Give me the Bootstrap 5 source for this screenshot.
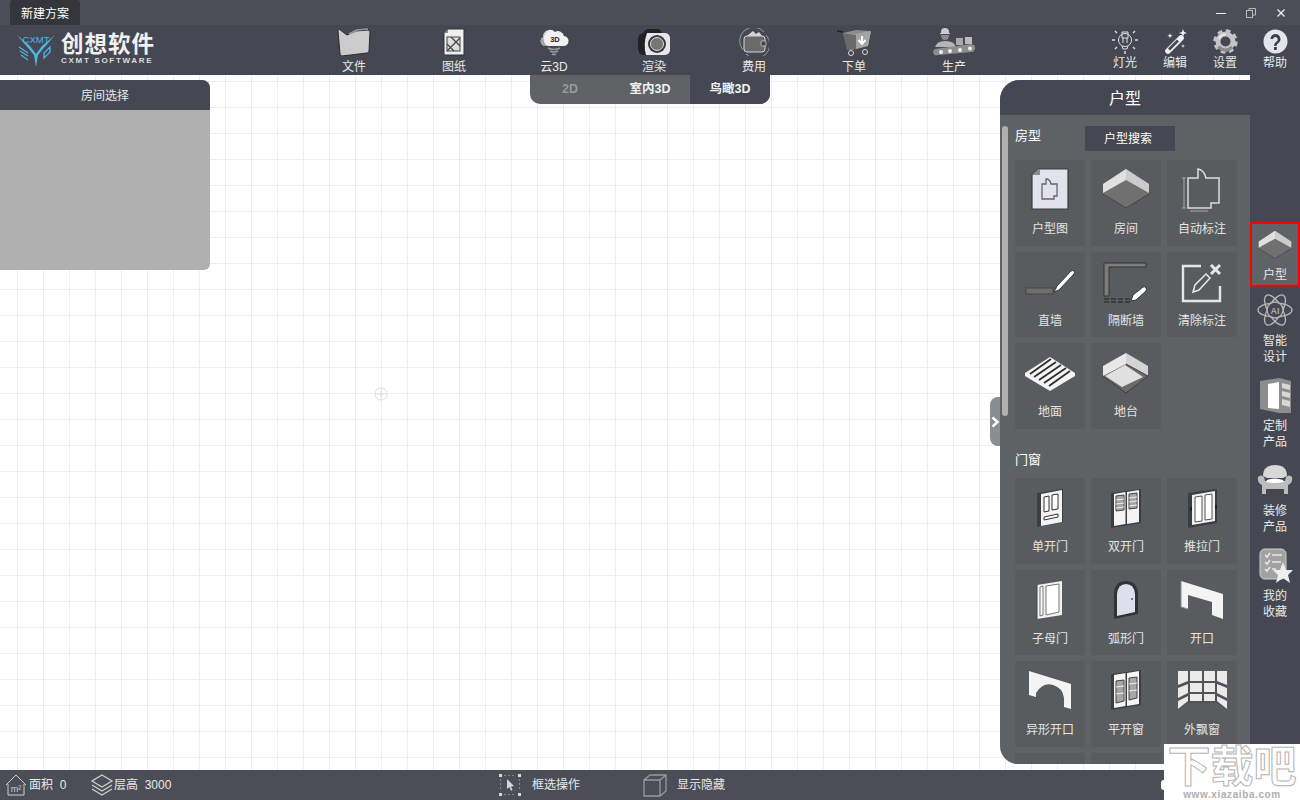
<!DOCTYPE html>
<html lang="zh-CN">
<head>
  <meta charset="UTF-8">
  <meta name="viewport" content="width=device-width, initial-scale=1.0">
  <title>创想软件</title>
  <link href="https://cdn.jsdelivr.net/npm/bootstrap@5.3.3/dist/css/bootstrap.min.css" rel="stylesheet">
  <style>
    html, body { height: 100%; overflow: hidden; }
    body {
      font-family: "Liberation Sans", "Noto Sans CJK SC", sans-serif;
      font-size: 12px;
      color: #e8e8e8;
      background: #fff;
    }
    svg { display: block; }
    .app-shell { width: 1300px; height: 800px; }

    /* title strip */
    .title-strip { height: 25px; background: #4b4e57; }
    .plan-tab { width: 70px; height: 25px; margin-left: 10px; padding-left: 11px; line-height: 28px; background: #33363b; color: #fff; border-radius: 3px 3px 0 0; }
    .win-btn { width: 30px; height: 25px; }

    /* main menu */
    .menu-bar { height: 50px; background: #454852; }
    .brand-box { width: 304px; padding-left: 17px; }
    .brand-logo { margin-top: 9px; }
    .brand-text { margin: 7px 0 0 6px; }
    .brand-name { font-size: 22.500px; line-height: 26px; font-weight: 700; letter-spacing: 1px; color: #f0f0f0; white-space: nowrap; }
    .brand-sub { font-size: 8px; line-height: 9px; font-weight: 700; letter-spacing: 1.700px; color: #ddd; margin-top: -2px; white-space: nowrap; }
    .menu-item { width: 100px; padding-top: 3px; }
    .menu-item svg { height: 28px; }
    .menu-item span { display: block; line-height: 18px; margin-top: 2px; }
    .tool-item { width: 50px; padding-top: 4px; }
    .tool-item svg { height: 25px; }
    .tool-item span { display: block; line-height: 16px; margin-top: 1px; }

    /* canvas */
    .work-row { height: 695px; }
    .draw-canvas {
      width: 1250px;
      background-color: #fff;
      background-image: linear-gradient(#eeeeee 1px, transparent 1px), linear-gradient(90deg, #eeeeee 1px, transparent 1px);
      background-size: 26px 26px;
      background-position: 0 6px, 17px 0;
    }
    .origin-mark { left: 374px; top: 312px; }

    .room-picker { left: 0; top: 5px; width: 210px; height: 190px; background: #b0b0b0; border-radius: 0 8px 6px 0; overflow: hidden; }
    .room-picker-head { height: 30px; line-height: 32px; background: #454852; text-align: center; font-size: 12px; }

    .view-switch { left: 530px; top: 0; width: 240px; height: 29px; border-radius: 0 0 10px 10px; overflow: hidden; background: #5f6366; }
    .view-cell { width: 80px; line-height: 28px; text-align: center; font-weight: 700; font-size: 12.500px; color: #f2f2f2; }
    .view-cell.is-off { color: #999; }
    .view-cell.is-dark { background: #454852; }

    .type-panel { left: 1000px; top: 5px; width: 250px; height: 684px; background: #5f6265; border-radius: 20px 0 0 18px; overflow: hidden; }
    .type-panel-head { height: 35px; line-height: 37px; background: #454852; text-align: center; font-size: 16px; color: #fff; }
    .type-panel-body { padding: 11px 0 0 15px; }
    .group-head { height: 25px; margin-bottom: 9px; }
    .group-head.is-next { margin-top: 18px; margin-bottom: 6.500px; }
    .group-title { font-size: 13px; line-height: 19px; color: #fff; width: 70px; }
    .group-head.is-next .group-title { padding-top: 3px; }
    .search-btn { width: 90px; height: 25px; line-height: 27px; padding-right: 4px; text-align: center; background: #454852; color: #fff; }
    .tile-grid { display: grid; grid-template-columns: repeat(3, 70px); grid-auto-rows: 85.500px; gap: 6px; }
    .tile { background: #595c5f; padding-top: 7px; color: #e4e4e4; }
    .tile svg { width: 60px; height: 46px; margin: 0 auto; }
    .tile span { display: block; text-align: center; line-height: 16px; margin-top: 8px; }
    .panel-scroll { left: 2px; top: 46px; width: 6px; height: 290px; border-radius: 3px; background: #b0b0b0; }
    .panel-toggle { left: 990px; top: 322px; width: 10px; height: 49px; background: #8b8e91; border-radius: 8px 0 0 8px; }

    /* right rail */
    .side-rail { width: 50px; background: #454852; padding-top: 147px; }
    .rail-item { height: 85px; text-align: center; line-height: 15.500px; color: #e8e8e8; }
    .rail-item svg { width: 36px; height: 36px; margin: 0 auto 6px; }
    .rail-item.is-current { height: 65px; margin-bottom: 5px; background: #5f6366; border: 2px solid #f00; padding-top: 6px; }
    .rail-item.is-current svg { width: 34px; height: 30px; margin-bottom: 8px; }

    /* status bar */
    .status-bar { height: 30px; background: #4b4e57; font-size: 12px; }
    .status-one { width: 90px; padding-left: 5px; }
    .status-two { width: 408px; }
    .status-three { width: 145px; }
    .status-label { line-height: 32px; white-space: nowrap; }
    .status-label.is-far { margin-left: 10px; }
    .white-chip { left: 1161px; top: 780px; width: 3px; height: 10px; background: #fff; border-radius: 3px 0 0 3px; }

    /* download-site stamp */
    .site-stamp { left: 1164px; top: 744px; width: 136px; height: 56px; background: #fff; text-align: center; }
    .stamp-big { font-size: 43px; line-height: 46px; font-weight: 700; color: #fff; -webkit-text-stroke: 1px #b4b4b4; white-space: nowrap; }
    .stamp-url { font-size: 10px; line-height: 10px; font-weight: 700; color: #b0b0b0; letter-spacing: .6px; white-space: nowrap; }
  </style>
</head>
<body>
  <svg width="0" height="0" class="position-absolute">
    <symbol id="ic-room" viewBox="0 0 48 40">
      <polygon points="24,0 47,15 47,25 24,39 1,25 1,15" fill="#707070"/>
      <polygon points="24,0 1,15 1,24 24,11" fill="#e0e0e0"/>
      <polygon points="24,0 47,15 47,24 24,11" fill="#cccccc"/>
      <path d="M1 25l23 14 23-14" fill="none" stroke="#444"/>
    </symbol>
  </svg>

  <div class="app-shell d-flex flex-column position-relative">

    <!-- title strip -->
    <div class="title-strip d-flex align-items-end">
      <div class="plan-tab">新建方案</div>
      <div class="ms-auto d-flex me-1">
        <div class="win-btn d-flex align-items-center justify-content-center">
          <svg width="10" height="10"><line x1="0" y1="5.500" x2="10" y2="5.500" stroke="#eee" stroke-width="1"/></svg>
        </div>
        <div class="win-btn d-flex align-items-center justify-content-center">
          <svg width="10" height="10" fill="none" stroke="#bbb"><rect x=".5" y="2.500" width="6" height="7"/><path d="M3 2V.5h6.500V7H7"/></svg>
        </div>
        <div class="win-btn d-flex align-items-center justify-content-center">
          <svg width="10" height="10" stroke="#eee" stroke-width="1.200"><line x1="1.500" y1="1.500" x2="8.500" y2="8.500"/><line x1="8.500" y1="1.500" x2="1.500" y2="8.500"/></svg>
        </div>
      </div>
    </div>

    <!-- main menu -->
    <div class="menu-bar d-flex">
      <div class="brand-box d-flex">
        <svg class="brand-logo" width="38" height="33" viewBox="0 0 38 33">
          <text x="19" y="9" text-anchor="middle" font-family="Liberation Sans" font-size="9.500" fill="#4fb6e6">CXMT</text>
          <path d="M0 1L13 12l6 8 6-8L38 1 26 15l-5 6-2 12-2-12-5-6z" fill="#4fb6e6"/>
          <path d="M2 13l9 6M3 17l8 5M4 21l7 5" stroke="#4fb6e6" stroke-width="1.200"/>
          <path d="M27 19l6-6v5l-6 6z" fill="none" stroke="#4fb6e6" stroke-width="1.300"/>
        </svg>
        <div class="brand-text">
          <div class="brand-name">创想软件</div>
          <div class="brand-sub">CXMT SOFTWARE</div>
        </div>
      </div>

      <div class="menu-item text-center">
        <svg class="mx-auto" width="34" viewBox="0 0 34 28">
          <path d="M2 1q-1 0-1 2l2 23q0 2 2 2l25-3q2 0 2-2l1-19q0-2-2-2L19 3l-9 4z" fill="#cbcbcb" stroke="#2a2a2a" stroke-width="1"/>
          <path d="M12 6l8-4 11-1" fill="none" stroke="#9a9a9a" stroke-width="1.500"/>
        </svg>
        <span>文件</span>
      </div>
      <div class="menu-item text-center">
        <svg class="mx-auto" width="24" viewBox="0 0 24 28">
          <path d="M6 1h16v26H2V5z" fill="#eee" stroke="#333"/>
          <path d="M2 5l4-4v4z" fill="#888"/>
          <rect x="5" y="9" width="13" height="14" fill="#ddd" stroke="#444"/>
          <path d="M5 23L18 10M9 9l9 9M5 16l7 7" stroke="#444" stroke-width="1.200"/>
        </svg>
        <span>图纸</span>
      </div>
      <div class="menu-item text-center">
        <svg class="mx-auto" width="30" viewBox="0 0 30 28">
          <path d="M5 18a5 5 0 0 1-1-9 7 7 0 0 1 12-5 6 6 0 0 1 9 4 5 5 0 0 1-1 10z" fill="#f1f1f1"/>
          <path d="M5 18a5 5 0 0 1-1-9 7 7 0 0 1 7-6 8 8 0 0 0-2 15z" fill="#a4a4a4"/>
          <text x="16" y="14" text-anchor="middle" font-family="Liberation Sans" font-size="7.500" font-weight="700" fill="#222">3D</text>
          <path d="M9 20q6 3 12 0M11 23q4 2 8 0M13 26q2 1 4 0" fill="none" stroke="#999" stroke-width="1.600"/>
        </svg>
        <span>云3D</span>
      </div>
      <div class="menu-item text-center">
        <svg class="mx-auto" width="34" viewBox="0 0 34 28">
          <path d="M6 6q1-5 6-5h10l4 5z" fill="#222"/>
          <rect x="1" y="5" width="32" height="22" rx="5" fill="#e6e6ee"/>
          <path d="M6 5Q1 5 1 10v12q0 5 5 5h3q-3-11 1-22z" fill="#222"/>
          <circle cx="20" cy="16" r="9" fill="#3a3a3a"/>
          <circle cx="20" cy="16" r="6.500" fill="#777" stroke="#d8d8d8"/>
        </svg>
        <span>渲染</span>
      </div>
      <div class="menu-item text-center">
        <svg class="mx-auto" width="30" viewBox="0 0 30 28">
          <path d="M4 22A13.500 13.500 0 0 1 25 4M27 7A13.500 13.500 0 0 1 7 26" fill="none" stroke="#9a9c9f" stroke-width="1"/>
          <path d="M8 8l6-5 3 3 3-2 3 4z" fill="#d8d8d8"/>
          <rect x="5" y="8" width="21" height="16" rx="3" fill="#6b6b6b" stroke="#d4d4d4" stroke-width="1"/>
          <rect x="22" y="13" width="5" height="5" rx="1" fill="#444" stroke="#ccc" stroke-width=".8"/>
        </svg>
        <span>费用</span>
      </div>
      <div class="menu-item text-center">
        <svg class="mx-auto" width="36" viewBox="0 0 36 28">
          <path d="M1 3l6 1" stroke="#222" stroke-width="1.500"/>
          <polygon points="7,5 20,2 35,3 32,18 13,22" fill="#8c8c8c"/>
          <polygon points="7,5 20,6 35,3 32,18 20,21 13,22" fill="#a4a4a4"/>
          <polygon points="7,5 20,7 20,21 11,22" fill="#6a6a6a"/>
          <path d="M26 8v7M22.500 12l3.500 4 3.500-4" fill="none" stroke="#fff" stroke-width="2"/>
          <circle cx="15" cy="25" r="2.500" fill="#444" stroke="#ddd"/>
          <circle cx="29" cy="24" r="2.500" fill="#444" stroke="#ddd"/>
        </svg>
        <span>下单</span>
      </div>
      <div class="menu-item text-center">
        <svg class="mx-auto" width="44" viewBox="0 0 44 28">
          <path d="M9 4a4 4 0 0 1 8 0v1h1v1H8V5h1z" fill="#ccc"/>
          <path d="M9 7h8q0 5-4 5t-4-5z" fill="#8c8c8c"/>
          <path d="M3 19q2-6 10-6t10 4v2z" fill="#b5b5b5"/>
          <rect x="24" y="10" width="7" height="7" fill="#aaa"/>
          <rect x="33" y="9" width="7" height="7" fill="#bbb"/>
          <path d="M3 21l36-5a4 4 0 0 1 4 5 4 4 0 0 1-3 3L6 27a3 3 0 0 1-3-6z" fill="#8e8e8e"/>
          <circle cx="9" cy="24" r="2" fill="#eee"/><circle cx="18" cy="23" r="2" fill="#eee"/><circle cx="28" cy="22" r="2" fill="#eee"/><circle cx="38" cy="20.500" r="2" fill="#eee"/>
        </svg>
        <span>生产</span>
      </div>

      <div class="ms-auto d-flex">
        <div class="tool-item text-center">
          <svg class="mx-auto" width="26" viewBox="0 0 26 25" fill="none" stroke="#e0e0e0" stroke-width="1">
            <circle cx="13" cy="11" r="6.500"/>
            <path d="M10 3h6v6h-6zM10 17l1 3h4l1-3M11 9v5M15 9v5"/>
            <path d="M3 11H0M26 11h-3M5 4L3 2M21 4l2-2M5 18l-2 2M21 18l2 2M13 22v3" stroke-width="1.400"/>
          </svg>
          <span>灯光</span>
        </div>
        <div class="tool-item text-center">
          <svg class="mx-auto" width="24" viewBox="0 0 24 25">
            <path d="M16 7L3 20a2.500 2.500 0 0 0 4 4L20 11a2.600 2.600 0 0 0-4-4z" fill="#f0f0f0"/>
            <path d="M5 19.500l2 2 9-9-2-2z" fill="#454852"/>
            <path d="M20 0l1 3 3 1-3 1-1 3-1-3-3-1 3-1zM7 4l.7 2 2 .7-2 .7L7 9.500l-.7-2-2-.7 2-.7zM20 15l.5 1.500 1.500.5-1.500.5-.5 1.500-.5-1.500L18 17l1.500-.5z" fill="#f0f0f0"/>
          </svg>
          <span>编辑</span>
        </div>
        <div class="tool-item text-center">
          <svg class="mx-auto" width="25" viewBox="0 0 25 25" fill="none">
            <circle cx="12.500" cy="12.500" r="10.500" stroke="#c4c4c4" stroke-width="3.400" stroke-dasharray="4.600 3.650"/>
            <circle cx="12.500" cy="12.500" r="7.500" stroke="#c4c4c4" stroke-width="5"/>
            <path d="M5.600 17.500A8.500 8.500 0 0 0 19 18" stroke="#8a8a8a" stroke-width="3"/>
            <path d="M12.500 5.500a7 7 0 0 0-6.500 4.500" stroke="#e8e8e8" stroke-width="2"/>
          </svg>
          <span>设置</span>
        </div>
        <div class="tool-item text-center">
          <svg class="mx-auto" width="25" viewBox="0 0 25 25">
            <circle cx="12.500" cy="12.500" r="12" fill="#e4e4ec"/>
            <path d="M7.500 10a5 5 0 1 1 8 4q-2 1.200-2 3h-2.500q0-3 2.500-4.500a2.400 2.400 0 1 0-3.500-2.500z" fill="#3b3d44"/>
            <rect x="11" y="18" width="2.800" height="3" fill="#3b3d44"/>
          </svg>
          <span>帮助</span>
        </div>
      </div>
    </div>

    <!-- work area -->
    <div class="work-row d-flex">
      <div class="draw-canvas position-relative">
        <svg class="origin-mark position-absolute" width="14" height="14" fill="none" stroke="#dcdcdc">
          <circle cx="7" cy="7" r="6"/><path d="M7 3v8M3 7h8"/>
        </svg>

        <div class="room-picker position-absolute">
          <div class="room-picker-head">房间选择</div>
        </div>

        <div class="view-switch position-absolute d-flex">
          <div class="view-cell is-off">2D</div>
          <div class="view-cell">室内3D</div>
          <div class="view-cell is-dark">鸟瞰3D</div>
        </div>

        <div class="panel-toggle position-absolute d-flex align-items-center justify-content-center">
          <svg width="9" height="12" fill="none" stroke="#fff" stroke-width="2.400"><path d="M1.500 1.500L6.500 6l-5 4.500"/></svg>
        </div>

        <div class="type-panel position-absolute">
          <div class="type-panel-head">户型</div>
          <div class="type-panel-body">
            <div class="group-head d-flex">
              <div class="group-title">房型</div>
              <div class="search-btn">户型搜索</div>
            </div>
            <div class="tile-grid">
              <div class="tile">
                <svg viewBox="0 0 60 46">
                  <path d="M18 2h30v40H12V8z" fill="#e2e2ec" stroke="#3a3a3a" stroke-width="1.200"/>
                  <path d="M12 8l6-6q2 0 2 1v5z" fill="#8a8a8a"/>
                  <path d="M22 17h4v-5q4 0 5 5h6v12h-3v3H22z" fill="none" stroke="#666" stroke-width="1.300"/>
                </svg>
                <span>户型图</span>
              </div>
              <div class="tile">
                <svg viewBox="0 0 60 46"><use href="#ic-room" x="6" y="2" width="48" height="40"/></svg>
                <span>房间</span>
              </div>
              <div class="tile">
                <svg viewBox="0 0 60 46" fill="none" stroke="#dcdcdc" stroke-width="1.500">
                  <path d="M16 11h10V2q6 1 8 9h13v25h-8v5H16z"/>
                  <path d="M12 11v30M10 11h4M10 41h4M18 44h18" stroke="#a8a8a8" stroke-width="1"/>
                </svg>
                <span>自动标注</span>
              </div>
              <div class="tile">
                <svg viewBox="0 0 60 46">
                  <rect x="6" y="29" width="27" height="6" fill="#6e6e6e" stroke="#444"/>
                  <path d="M34 33l3-6 14-15q2-1 3 0t0 3L39 31z" fill="#fff" stroke="#333"/>
                </svg>
                <span>直墙</span>
              </div>
              <div class="tile">
                <svg viewBox="0 0 60 46">
                  <path d="M8 4h42v4H13v29H8z" fill="#7d7d7d" stroke="#333"/>
                  <path d="M8 40h28M8 43h28" stroke="#333" stroke-width="1.500" stroke-dasharray="5 2"/>
                  <path d="M35 42l2-6 10-8q2-1 3 1t0 3L40 41z" fill="#fff" stroke="#333"/>
                </svg>
                <span>隔断墙</span>
              </div>
              <div class="tile">
                <svg viewBox="0 0 60 46" fill="none" stroke="#e6e6e6" stroke-width="2.400">
                  <path d="M29 7H11v35h37V27"/>
                  <path d="M39 6l9 9M48 6l-9 9" stroke-width="3"/>
                  <path d="M21 33l2-7 11-11 4 4-11 12z" stroke-width="1.500"/>
                </svg>
                <span>清除标注</span>
              </div>
              <div class="tile">
                <svg viewBox="0 0 60 46">
                  <polygon points="30,7 55,23 55,26 30,41 5,26 5,23" fill="#f4f4f4"/>
                  <path d="M10 24L31 9M14 27L36 12M19 30L41 15M24 33L46 18M29 36L50 21" stroke="#2e2e2e" stroke-width="1.800"/>
                </svg>
                <span>地面</span>
              </div>
              <div class="tile">
                <svg viewBox="0 0 60 46">
                  <polygon points="30,3 52,16 52,26 30,43 7,26 7,16" fill="#6b6b6b"/>
                  <polygon points="30,3 7,16 7,26 30,14" fill="#e8e8e8"/>
                  <polygon points="30,3 52,16 52,26 30,14" fill="#d4d4d4"/>
                  <polygon points="29,15 47,27 26,37 9,26" fill="#e0e0e0"/>
                  <path d="M30 14l22 12-22 17-23-17" fill="none" stroke="#3e3e3e"/>
                </svg>
                <span>地台</span>
              </div>
            </div>

            <div class="group-head is-next">
              <div class="group-title">门窗</div>
            </div>
            <div class="tile-grid">
              <div class="tile">
                <svg viewBox="0 0 60 46">
                  <polygon points="17,8 43,4 43,37 17,42" fill="#3c3d40"/>
                  <polygon points="21,9 42,5 42,37 21,41" fill="#f4f4f4"/>
                  <path d="M24 12l5-1v15l-5 1zM32 10l6-1v15l-6 1zM24 32l14-3v3l-14 3z" fill="#fff" stroke="#333"/>
                </svg>
                <span>单开门</span>
              </div>
              <div class="tile">
                <svg viewBox="0 0 60 46">
                  <polygon points="15,8 45,4 45,38 15,43" fill="#3c3d40"/>
                  <polygon points="18,9 29.500,7 29.500,39 18,41" fill="#f4f4f4"/>
                  <polygon points="31,7 43,5 43,37 31,39" fill="#f4f4f4"/>
                  <path d="M20 11l8-1v15l-8 1zM33 9l8-1v15l-8 1z" fill="#a6a6a6" stroke="#444"/>
                  <path d="M20 15l8-1M20 19l8-1M20 23l8-1M33 13l8-1M33 17l8-1M33 21l8-1" stroke="#eee"/>
                </svg>
                <span>双开门</span>
              </div>
              <div class="tile">
                <svg viewBox="0 0 60 46">
                  <polygon points="16,8 45,4 45,38 16,43" fill="#3c3d40"/>
                  <polygon points="20,10 43,6 43,36 20,40" fill="#f0f0f0"/>
                  <path d="M23 12l7-1v25l-7 1zM33 10l7-1v25l-7 1z" fill="#fff" stroke="#555"/>
                  <rect x="18" y="22" width="2" height="4" fill="#222"/><rect x="43" y="20" width="2" height="4" fill="#222"/>
                </svg>
                <span>推拉门</span>
              </div>
              <div class="tile">
                <svg viewBox="0 0 60 46">
                  <polygon points="17,8 42,4 42,38 17,42" fill="#f2f2f2"/>
                  <path d="M20 10l3-1v29l-3 1zM26 9l13-2v28l-13 3z" fill="#fff" stroke="#777"/>
                  <path d="M17 8v34" stroke="#444"/>
                </svg>
                <span>子母门</span>
              </div>
              <div class="tile">
                <svg viewBox="0 0 60 46">
                  <path d="M18 16q1-12 12-12t12 12v21l-24 5z" fill="#333"/>
                  <path d="M21 17q1-10 9-10t9 10v18l-18 4z" fill="#dedfec"/>
                  <circle cx="36" cy="22" r="1" fill="#555"/>
                </svg>
                <span>弧形门</span>
              </div>
              <div class="tile">
                <svg viewBox="0 0 60 46">
                  <polygon points="9,4 51,17 51,42 40,38 40,25 16,18 16,32 9,30" fill="#f4f4f4"/>
                  <path d="M9 4v26l7 2" fill="none" stroke="#888"/>
                </svg>
                <span>开口</span>
              </div>
              <div class="tile">
                <svg viewBox="0 0 60 46">
                  <path d="M9 3l42 13v25l-7-2V30q-1-10-11-13T16 25v4l-7-2z" fill="#f4f4f4"/>
                </svg>
                <span>异形开口</span>
              </div>
              <div class="tile">
                <svg viewBox="0 0 60 46">
                  <polygon points="15,6 45,2 45,37 15,42" fill="#3c3d40"/>
                  <polygon points="18,7 29.500,5 29.500,38 18,40" fill="#f4f4f4"/>
                  <polygon points="31,5 43,3 43,36 31,38" fill="#f4f4f4"/>
                  <path d="M20 13l8-1v21l-8 2zM33 10l8-1v21l-8 2z" fill="#a6a6a6" stroke="#444"/>
                  <path d="M20 19l8-1M20 26l8-1M33 16l8-1M33 23l8-1" stroke="#eee"/>
                </svg>
                <span>平开窗</span>
              </div>
              <div class="tile">
                <svg viewBox="0 0 60 46">
                  <polygon points="6,3 55,3 55,42 45,35 16,35 6,42" fill="#4a4a4a" opacity=".5"/>
                  <path d="M6 3h10v10L6 17zM45 3h10v14l-10-4zM6 20l10-4v9L6 30zM45 16l10 4v10l-10-5zM6 33l10-5v5L6 41zM45 28l10 5v8l-10-8zM18 3h12v10H18zM32 3h11v10H32zM18 15h12v9H18zM32 15h11v9H32zM18 26h12v7H18zM32 26h11v7H32z" fill="#eaeaea"/>
                </svg>
                <span>外飘窗</span>
              </div>
              <div class="tile"></div>
              <div class="tile"></div>
              <div class="tile"></div>
            </div>
          </div>
          <div class="panel-scroll position-absolute"></div>
        </div>
      </div>

      <!-- right rail -->
      <div class="side-rail">
        <div class="rail-item is-current">
          <svg viewBox="0 0 48 40"><use href="#ic-room"/></svg>
          户型
        </div>
        <div class="rail-item">
          <svg viewBox="0 0 36 36" fill="none" stroke="#b5b5b5" stroke-width="1.400">
            <ellipse cx="18" cy="18" rx="17" ry="7"/>
            <ellipse cx="18" cy="18" rx="17" ry="7" transform="rotate(60 18 18)"/>
            <ellipse cx="18" cy="18" rx="17" ry="7" transform="rotate(120 18 18)"/>
            <circle cx="18" cy="18" r="8" fill="#454852"/>
            <text x="18" y="21.500" text-anchor="middle" font-family="Liberation Sans" font-size="9" font-weight="700" fill="#aaa" stroke="none">AI</text>
          </svg>
          智能<br>设计
        </div>
        <div class="rail-item">
          <svg viewBox="0 0 36 36">
            <polygon points="3,4 22,1 34,4 34,36 22,36 3,32" fill="#8d8d8d"/>
            <polygon points="11,7 22,5 22,32 11,31" fill="#fff"/>
            <path d="M25 6l8 2v5l-8-2zM25 14l8 2v5l-8-2zM25 22l8 2v6l-8-2z" fill="#d8d8d8"/>
          </svg>
          定制<br>产品
        </div>
        <div class="rail-item">
          <svg viewBox="0 0 36 36">
            <path d="M6 14q0-11 12-11t12 11l-4 2H10z" fill="#d8d8d8"/>
            <path d="M1 15q3-3 6 0l1 4h20l1-4q3-3 6 0 1 6-4 8v9h-4v-5H9v5H5v-9q-5-2-4-8z" fill="#bdbdbd"/>
            <path d="M10 18q8-3 16 0l1 2q-9 2-18 0z" fill="#fff"/>
          </svg>
          装修<br>产品
        </div>
        <div class="rail-item">
          <svg viewBox="0 0 36 36">
            <rect x="3" y="2" width="26" height="30" rx="5" fill="#a2a2a2" stroke="#d0d0d0"/>
            <path d="M8 8l2 2 3-4M8 15l2 2 3-4M8 22l2 2 3-4M15 8h10M15 15h9M15 22h4" fill="none" stroke="#e8e8e8" stroke-width="1.500"/>
            <polygon points="26,15 29,23 36,23 31,28 33,36 26,31 19,36 21,28 16,23 23,23" fill="#eee"/>
          </svg>
          我的<br>收藏
        </div>
      </div>
    </div>

    <!-- status bar -->
    <div class="status-bar d-flex align-items-center">
      <div class="status-one d-flex align-items-center">
        <svg width="24" height="24" viewBox="0 0 24 24" fill="none" stroke="#cfcfcf">
          <path d="M1 12L11 2l10 10M3 11v11h16V11"/>
          <text x="11" y="19" text-anchor="middle" font-family="Liberation Sans" font-size="9" fill="#cfcfcf" stroke="none">m²</text>
        </svg>
        <span class="status-label">面积&nbsp;&nbsp;0</span>
      </div>
      <div class="status-two d-flex align-items-center">
        <svg width="24" height="24" viewBox="0 0 24 24" fill="none" stroke="#cfcfcf" stroke-width="1.300">
          <path d="M12 2l10 6-10 6L2 8zM2 12l10 6 10-6M2 16l10 6 10-6"/>
        </svg>
        <span class="status-label">层高&nbsp;&nbsp;3000</span>
      </div>
      <div class="status-three d-flex align-items-center">
        <svg width="24" height="24" viewBox="0 0 24 24">
          <path d="M1 1h3v3H1zM20 1h3v3h-3zM1 20h3v3H1zM20 20h3v3h-3z" fill="#d8d8d8"/>
          <path d="M2.500 6v12M21.500 6v12M6 2.500h12M6 21.500h12" stroke="#888" stroke-dasharray="2 2"/>
          <path d="M9 6l7 7-3 .5 1.500 3.500-1.500.7L11.500 14 9 16z" fill="#d8d8d8"/>
        </svg>
        <span class="status-label is-far">框选操作</span>
      </div>
      <div class="d-flex align-items-center">
        <svg width="24" height="24" viewBox="0 0 24 24" fill="none" stroke="#9a9a9a" stroke-width="1.300">
          <path d="M1 7h16v16H1zM1 7l6-5h16v16l-6 5M17 7l6-5"/>
        </svg>
        <span class="status-label is-far">显示隐藏</span>
      </div>
    </div>

    <div class="white-chip position-absolute"></div>
    <div class="site-stamp position-absolute">
      <div class="stamp-big">下载吧</div>
      <div class="stamp-url">www.xiazaiba.com</div>
    </div>
  </div>

  <script src="https://cdn.jsdelivr.net/npm/bootstrap@5.3.3/dist/js/bootstrap.bundle.min.js"></script>
</body>
</html>
